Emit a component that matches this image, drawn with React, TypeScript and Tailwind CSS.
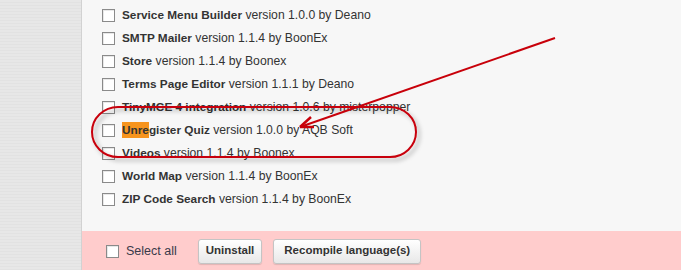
import React from "react";

const rows: [string, string][] = [
  ["Service Menu Builder", "version 1.0.0 by Deano"],
  ["SMTP Mailer", "version 1.1.4 by BoonEx"],
  ["Store", "version 1.1.4 by Boonex"],
  ["Terms Page Editor", "version 1.1.1 by Deano"],
  ["TinyMCE 4 integration", "version 1.0.6 by misterpopper"],
  ["Unregister Quiz", "version 1.0.0 by AQB Soft"],
  ["Videos", "version 1.1.4 by Boonex"],
  ["World Map", "version 1.1.4 by BoonEx"],
  ["ZIP Code Search", "version 1.1.4 by BoonEx"],
];

function Box() {
  return <span className="inline-block w-[13px] h-[13px] shrink-0 bg-white border border-[#8a8a8a] shadow-[inset_1px_1px_0_#e8e8e8]" />;
}

export default function App() {
  return (
    <div
      className="relative w-[681px] h-[270px] overflow-hidden flex text-[12px] text-[#333]"
      style={{ fontFamily: '"Liberation Sans", Arial, sans-serif' }}
    >
      <div className="w-[82px] shrink-0 bg-[#e4e4e4] border-r border-[#d2d2d2] bg-[repeating-linear-gradient(0deg,#e2e2e2_0px,#e2e2e2_1px,#e7e7e7_1px,#e7e7e7_3px)]" />
      <div className="flex-1 flex flex-col bg-[#f7f7f7]">
        <div className="h-[231px] pt-[4px] pl-[20px]">
          {rows.map(([name, rest], i) => (
            <div key={i} className="h-[23px] flex items-center gap-[7px]">
              <Box />
              <span className="whitespace-nowrap leading-[15px] text-[12.2px]">
                {name === "Unregister Quiz" ? (
                  <b className="text-[11.8px]">
                    <span className="bg-[#f7941d] py-[1px]">Unre</span>gister Quiz
                  </b>
                ) : (
                  <b className="text-[11.8px]">{name}</b>
                )}{" "}
                {rest}
              </span>
            </div>
          ))}
        </div>
        <div className="flex-1 bg-[#ffcccc] flex items-center pl-[24px] pt-[1px]">
          <label className="flex items-center gap-[7px] mr-[21px]">
            <Box />
            <span className="text-[12.5px] text-[#3a3a4a]">Select all</span>
          </label>
          <button className="h-[25px] px-[7px] mr-[11px] rounded-[3px] border border-[#c4c4c4] bg-gradient-to-b from-[#ffffff] to-[#e8e8e8] font-bold text-[11.5px] text-[#333] shadow-[0_1px_1px_rgba(0,0,0,0.12)]">
            Uninstall
          </button>
          <button className="h-[25px] px-[10px] rounded-[3px] border border-[#c4c4c4] bg-gradient-to-b from-[#ffffff] to-[#e8e8e8] font-bold text-[11.5px] text-[#333] shadow-[0_1px_1px_rgba(0,0,0,0.12)]">
            Recompile language(s)
          </button>
        </div>
      </div>
      <svg className="absolute inset-0 pointer-events-none" width="681" height="270">
        <defs>
          <filter id="sh" x="-10%" y="-30%" width="120%" height="160%">
            <feDropShadow dx="3" dy="3" stdDeviation="2" floodColor="#000" floodOpacity="0.3" />
          </filter>
        </defs>
        <rect x="92" y="107" width="324" height="50" rx="26" ry="25" fill="none" stroke="#c8000a" strokeWidth="2" filter="url(#sh)" />
        <line x1="555" y1="38" x2="300" y2="127" stroke="#c8000a" strokeWidth="2" />
        <path d="M300 127 L311 117 M300 127 L314 127" stroke="#c8000a" strokeWidth="2.5" fill="none" />
      </svg>
    </div>
  );
}
